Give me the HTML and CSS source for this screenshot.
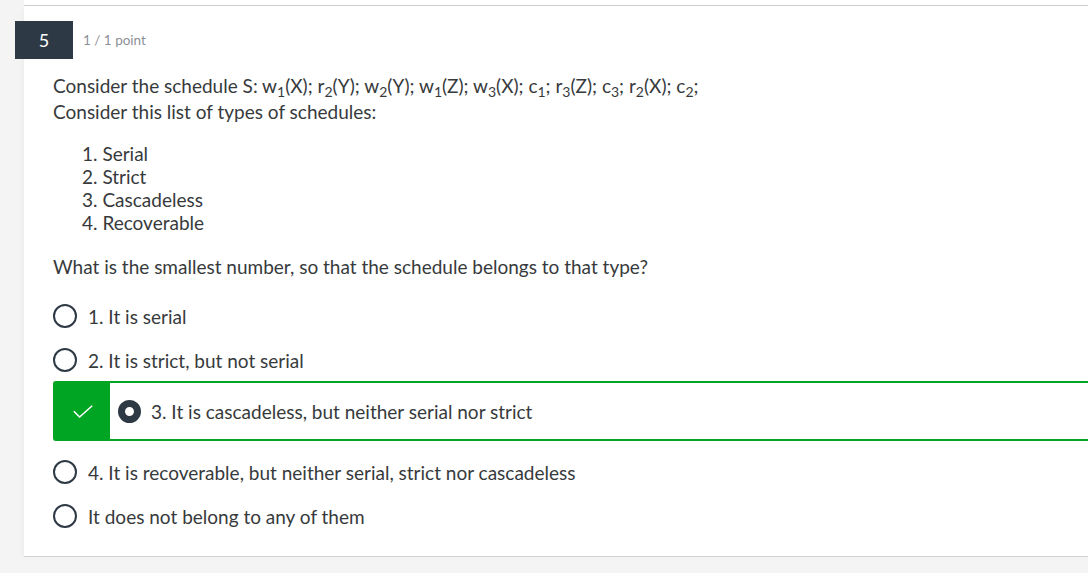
FILE: index.html
```html
<!DOCTYPE html>
<html>
<head>
<meta charset="utf-8">
<link rel="stylesheet" href="styles.css">
</head>
<body>
<div class="prev"></div>
<div class="card">
  <div class="header">
    <div class="badge">5</div>
    <span class="points">1 / 1 point</span>
  </div>
  <div class="body">
    <p class="q">Consider the schedule S: w<sub>1</sub>(X); r<sub>2</sub>(Y); w<sub>2</sub>(Y); w<sub>1</sub>(Z); w<sub>3</sub>(X); c<sub>1</sub>; r<sub>3</sub>(Z); c<sub>3</sub>; r<sub>2</sub>(X); c<sub>2</sub>;<br>Consider this list of types of schedules:</p>
    <ol class="types">
      <li>Serial</li>
      <li>Strict</li>
      <li>Cascadeless</li>
      <li>Recoverable</li>
    </ol>
    <p class="ask">What is the smallest number, so that the schedule belongs to that type?</p>
    <div class="options">
      <div class="opt"><span class="radio"></span><span>1. It is serial</span></div>
      <div class="opt"><span class="radio"></span><span>2. It is strict, but not serial</span></div>
      <div class="opt selected">
        <span class="mark"><svg width="20" height="13" viewBox="0 0 20 13"><path d="M0.8 6.2 L6.6 12 L19.2 0.8" fill="none" stroke="#ffffff" stroke-width="1.5"/></svg></span>
        <span class="radio on"></span><span>3. It is cascadeless, but neither serial nor strict</span>
      </div>
      <div class="opt"><span class="radio"></span><span>4. It is recoverable, but neither serial, strict nor cascadeless</span></div>
      <div class="opt"><span class="radio"></span><span>It does not belong to any of them</span></div>
    </div>
  </div>
</div>
</body>
</html>
```

FILE: styles.css
```css
html, body {
  margin: 0;
  padding: 0;
  background: #f4f4f4;
  font-family: Lato, "Open Sans", sans-serif;
  color: #373a3c;
  overflow: hidden;
}
.prev {
  margin-left: 24px;
  height: 5px;
  background: #fff;
  border-bottom: 1px solid #cfcfcf;
}
.card {
  margin-left: 24px;
  background: #fff;
  border-bottom: 1px solid #d2d2d2;
  box-shadow: 0 2px 6px rgba(0,0,0,0.06);
  position: relative;
  height: 551px;
  box-sizing: border-box;
}
.header {
  height: 53px;
  display: flex;
  align-items: center;
  padding-left: 59px;
  padding-top: 15px;
  box-sizing: border-box;
}
.badge {
  position: absolute;
  left: -9px;
  top: 15px;
  width: 58px;
  height: 38px;
  background: #2d3a45;
  color: #fff;
  font-size: 18px;
  display: flex;
  align-items: center;
  justify-content: center;
}
.points {
  font-size: 13.5px;
  color: #8b9096;
}
.body {
  padding-left: 29px;
  font-size: 19px;
}
.q {
  margin: 14px 0 0 0;
  line-height: 26px;
}
sub {
  font-size: 14px;
  line-height: 0;
  vertical-align: -4px;
}
.types {
  margin: 17px 0 0 0;
  line-height: 23px;
  list-style-position: inside;
  padding-left: 29px;
}
.ask {
  margin: 20px 0 0 0;
  line-height: 26px;
}
.options {
  margin-top: 14px;
  display: flex;
  flex-direction: column;
}
.opt {
  height: 44px;
  display: flex;
  align-items: center;
  gap: 11px;
}
.radio {
  width: 20px;
  height: 20px;
  border: 2px solid #2d3a45;
  border-radius: 50%;
  flex: none;
}
.opt.selected {
  height: 60px;
  margin-top: -1px;
  margin-bottom: 9px;
  border: 2px solid #00a523;
  border-right: none;
  border-radius: 3px 0 0 3px;
  box-sizing: border-box;
  gap: 10px;
  margin-right: -10px;
}
.mark {
  width: 55px;
  align-self: stretch;
  background: #00a523;
  display: flex;
  align-items: center;
  justify-content: center;
  margin-right: -2px;
}
.radio.on {
  width: 9px;
  height: 9px;
  border: 7px solid #2d3a45;
  background: #fff;
}
```
